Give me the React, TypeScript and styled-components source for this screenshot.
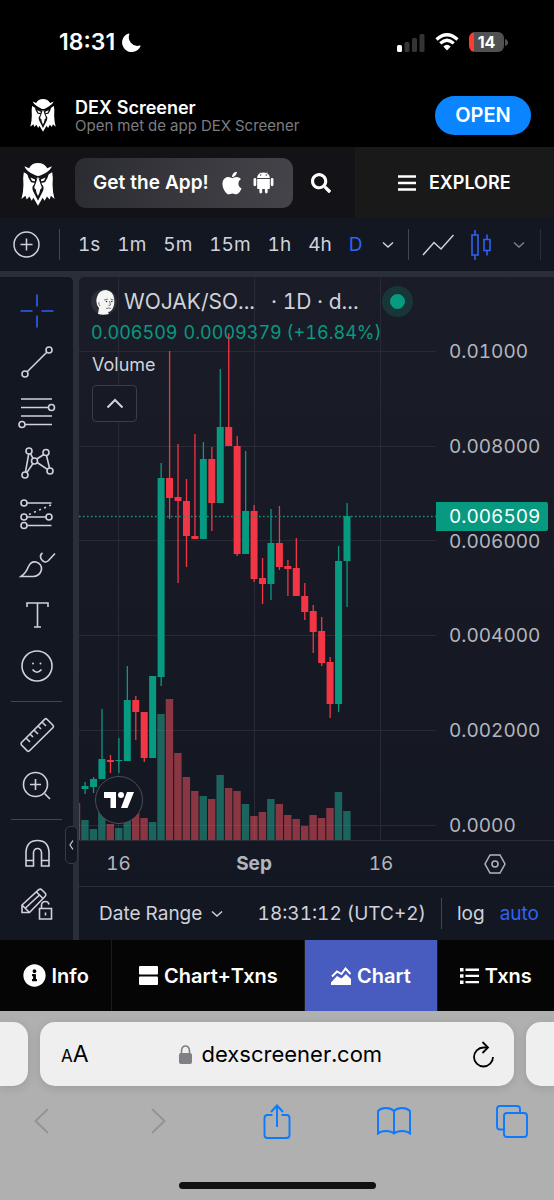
import React from 'react';
import styled, { createGlobalStyle } from 'styled-components';
import { FaApple, FaInfoCircle, FaSearch } from 'react-icons/fa';
import { IoLogoAndroid } from 'react-icons/io';

const c = {
  panel: '#131722',
  line: '#2a2e39',
  text: '#cfd2dc',
  axis: '#b2b5be',
  blue: '#2f62f5',
  green: '#089981',
  red: '#f23645',
};

const GlobalStyle = createGlobalStyle`
  * { box-sizing: border-box; }
  body { margin: 0; background: #000; font-family: Inter, "Liberation Sans", sans-serif; }
  button { font: inherit; font-variant-numeric: inherit; color: inherit; background: none; border: 0; padding: 0; cursor: pointer; }
  a { color: inherit; text-decoration: none; }
  svg { display: block; flex: none; }
`;

const Page = styled.div`
  display: flex;
  flex-direction: column;
  min-height: 100vh;
  background: #000;
  color: #fff;
  font-variant-numeric: tabular-nums;
`;

/* ---------- phone status bar and app banner ---------- */

const StatusBar = styled.div`
  display: flex;
  align-items: center;
  justify-content: space-between;
  height: 84px;
  padding: 0 46px 0 59px;
  font-variant-numeric: normal;
`;
const Clock = styled.div`
  display: flex;
  align-items: center;
  gap: 7px;
  font-size: 23px;
  font-weight: 600;
`;
const Indicators = styled.div`
  display: flex;
  align-items: center;
  gap: 10px;
`;
const Battery = styled.div`
  width: 35px;
  height: 20px;
  border-radius: 6px;
  background: linear-gradient(90deg, #ff3b30 5px, #515153 5px);
  font-size: 16px;
  font-weight: 700;
  line-height: 20px;
  text-align: center;
`;
const BatteryWrap = styled.div`
  display: flex;
  align-items: center;
  gap: 1px;
`;

const Banner = styled.section`
  display: flex;
  align-items: center;
  height: 63px;
  padding: 0 23px 0 30px;
`;
const BannerText = styled.div`
  flex: 1;
  margin-left: 19px;
`;
const BannerTitle = styled.div`
  font-size: 18px;
  font-weight: 600;
  line-height: 20px;
`;
const BannerSub = styled.div`
  font-size: 15px;
  line-height: 16px;
  color: #7c7c80;
`;
const OpenLink = styled.a`
  width: 96px;
  border-radius: 20px;
  background: #0a84ff;
  font-size: 20px;
  font-weight: 600;
  line-height: 39px;
  text-align: center;
`;

/* ---------- site header ---------- */

const Header = styled.header`
  display: flex;
  height: 71px;
  background: #131217;
`;
const HeaderMain = styled.div`
  display: flex;
  flex: 1;
  align-items: center;
  padding-left: 20px;
`;
const HomeLink = styled.a`
  padding-top: 4px;
`;
const GetApp = styled.a`
  display: flex;
  align-items: center;
  width: 218px;
  height: 50px;
  margin: 0 18px 0 19px;
  padding-left: 18px;
  border-radius: 11px;
  background: linear-gradient(100deg, #2b2b32, #45444a);
  font-size: 19px;
  font-weight: 600;
  white-space: nowrap;
`;
const StoreIcons = styled.span`
  display: flex;
  align-items: center;
  gap: 4px;
  margin-left: 10px;
`;
const Explore = styled.button`
  && {
    display: flex;
    flex: 0 0 36%;
    align-items: center;
    justify-content: center;
    gap: 13px;
    background: #191919;
    font-size: 18px;
    font-weight: 600;
  }
`;

/* ---------- chart toolbar ---------- */

const Toolbar = styled.nav`
  display: flex;
  align-items: center;
  height: 53px;
  padding-left: 13px;
  background: ${c.panel};
  color: ${c.text};
`;
const Rule = styled.span<{ $before?: number; $faint?: boolean }>`
  width: 1px;
  height: 31px;
  margin-left: ${p => p.$before ?? 0}px;
  background: ${p => (p.$faint ? '#2b2e3a' : '#434651')};
`;
const Intervals = styled.div`
  display: flex;
  gap: 17px;
  margin: 0 20px 0 18px;
`;
const Interval = styled.button<{ $active?: boolean }>`
  && { font-size: 19px; line-height: 30px; color: ${p => (p.$active ? c.blue : c.text)}; }
`;
const ToolGroup = styled.div`
  display: flex;
  align-items: center;
  gap: 17px;
  margin: 0 21px 0 13px;
`;
const MoreTypes = styled.button`
  && { color: #7c808b; }
`;

/* ---------- chart ---------- */

const Workspace = styled.main`
  display: flex;
  gap: 6px;
  padding-top: 6px;
  background: ${c.line};
`;
const Sidebar = styled.div`
  position: relative;
  display: flex;
  flex: none;
  flex-direction: column;
  align-items: center;
  width: 73px;
  padding: 9px 0 10px;
  border-radius: 0 5px 0 0;
  background: ${c.panel};
  color: ${c.text};
`;
const Tool = styled.button`
  display: flex;
  flex: 1;
  align-items: center;
  justify-content: center;
  width: 100%;
`;
const ToolRule = styled.span`
  width: 51px;
  height: 1px;
  margin: 8px 0;
  background: #434651;
`;
const Collapse = styled.button`
  && {
    position: absolute;
    right: -5px;
    bottom: 76px;
    display: grid;
    place-items: center;
    width: 13px;
    height: 38px;
    border: 1px solid #363a45;
    border-radius: 5px;
    background: ${c.panel};
  }
`;
const ChartColumn = styled.div`
  display: flex;
  flex: 1;
  flex-direction: column;
  min-width: 0;
  border-radius: 5px 0 0 0;
  background: linear-gradient(#1a1c27, ${c.panel});
`;
const Pane = styled.div`
  position: relative;
  display: flex;
`;
const Plot = styled.svg`
  flex: 1;
  min-width: 0;
  height: auto;
`;
const PriceAxis = styled.div`
  position: relative;
  display: flex;
  flex-direction: column;
  justify-content: space-between;
  width: 118px;
  padding: 63px 0 2px 13px;
  font-size: 19px;
  line-height: 24px;
  color: ${c.axis};
`;
const LastPrice = styled.div`
  position: absolute;
  top: 225px;
  left: 0;
  right: 6px;
  padding-left: 13px;
  border-radius: 0 2px 2px 0;
  background: ${c.green};
  color: #fff;
  line-height: 29px;
`;
const Legend = styled.div`
  position: absolute;
  top: 9px;
  left: 12px;
  right: 0;
  color: ${c.text};
`;
const LegendTitle = styled.div`
  display: flex;
  align-items: center;
  height: 31px;
  font-size: 21px;
  white-space: pre;
`;
const Symbol = styled.span`
  margin: 0 16px 0 7px;
`;
const Live = styled.span`
  width: 31px;
  height: 31px;
  margin-left: 23px;
  border: 8px solid #183537;
  border-radius: 50%;
  background: ${c.green};
`;
const Quote = styled.div`
  display: flex;
  gap: 6px;
  font-size: 18px;
  line-height: 32px;
  color: ${c.green};
`;
const VolumeLabel = styled.div`
  padding-left: 1px;
  font-size: 18px;
  line-height: 32px;
`;
const Fold = styled.button`
  && {
    display: grid;
    place-items: center;
    width: 45px;
    height: 37px;
    margin: 4px 0 0 1px;
    border: 1px solid #3a3d48;
    border-radius: 4px;
    background: #171a25;
  }
`;
const Badge = styled.a`
  position: absolute;
  left: 16px;
  bottom: 16px;
  display: grid;
  place-items: center;
  width: 48px;
  height: 48px;
  border: 1px solid #4a4d57;
  border-radius: 50%;
  background: ${c.panel};
`;
const TimeAxis = styled.div`
  display: flex;
  height: 47px;
  border: solid ${c.line};
  border-width: 1px 0;
  font-size: 19px;
  line-height: 46px;
  text-align: center;
  color: ${c.axis};
`;
const Dates = styled.div`
  display: grid;
  flex: 1;
  grid-template-columns: 79fr 192fr 62fr 24fr;
`;
const AxisSettings = styled.button`
  display: grid;
  place-items: center;
  width: 118px;
`;
const BottomRow = styled.div`
  display: flex;
  align-items: center;
  height: 53px;
  padding: 0 15px 0 20px;
  font-size: 19px;
  color: ${c.text};
  white-space: nowrap;
`;
const RangeButton = styled.button`
  display: flex;
  align-items: center;
  gap: 9px;
`;
const RightGroup = styled.div`
  display: flex;
  align-items: center;
  gap: 15px;
  margin-left: auto;
`;
const ScaleButton = styled.button<{ $active?: boolean }>`
  && { color: ${p => (p.$active ? c.blue : c.text)}; }
`;

/* ---------- page tabs ---------- */

const Tabs = styled.nav`
  display: flex;
  height: 71px;
  background: #050505;
`;
const Tab = styled.a<{ $grow: number; $active?: boolean }>`
  display: flex;
  flex: ${p => p.$grow} 1 0;
  align-items: center;
  justify-content: center;
  gap: 6px;
  border-right: 1px solid #1c1c1e;
  background: ${p => (p.$active ? '#485cc0' : 'transparent')};
  font-size: 20px;
  font-weight: 600;
  white-space: nowrap;
  &:last-child { border-right: 0; }
`;

/* ---------- browser chrome ---------- */

const Browser = styled.footer`
  display: flex;
  flex: 1;
  flex-direction: column;
  padding-top: 11px;
  background: #b0b0b0;
  color: #000;
  overflow: hidden;
`;
const AddressRow = styled.div`
  display: flex;
  gap: 12px;
`;
const SideCard = styled.div<{ $left?: boolean }>`
  width: 28px;
  border-radius: ${p => (p.$left ? '0 15px 15px 0' : '15px 0 0 15px')};
  background: #efefef;
  box-shadow: 0 2px 10px rgba(0, 0, 0, 0.12);
`;
const Address = styled.div`
  display: flex;
  flex: 1;
  align-items: center;
  justify-content: space-between;
  height: 64px;
  padding: 0 19px 0 21px;
  border-radius: 15px;
  background: #efefef;
  box-shadow: 0 2px 10px rgba(0, 0, 0, 0.12);
`;
const TextSize = styled.button`
  && { font-size: 23px; }
  small { font-size: 17px; }
`;
const Host = styled.div`
  display: flex;
  align-items: center;
  gap: 10px;
  font-size: 22px;
`;
const Actions = styled.div`
  display: flex;
  align-items: center;
  justify-content: space-between;
  height: 70px;
  padding: 0 25px 0 24px;
  color: #0a7aff;
`;
const Action = styled.button<{ $muted?: boolean }>`
  && {
    display: grid;
    place-items: center;
    width: 34px;
    height: 44px;
    color: ${p => (p.$muted ? '#949494' : 'inherit')};
  }
`;
const HomeBar = styled.div`
  width: 197px;
  height: 7px;
  margin: auto auto 11px;
  border-radius: 4px;
  background: #111;
`;

/* ---------- drawings ---------- */

const Owl = ({ width, height }: { width: number; height: number }) => (
  <svg width={width} height={height} viewBox="20 25 102 130" fill="#fff">
    <path d="M30 35 L44 41 Q52 25 71 25 Q90 25 99 41 L113 35 Q108 48 94 55 L80 62 Q71 66 63 62 L49 55 Q35 48 30 35Z" />
    <path d="M28 53 Q25 68 27 90 Q27 113 21 134 L33 124 L37 135 L45 126 L52 139 L57 130 L71 154 L85 130 L91 139 L98 126 L106 135 L110 124 L121 134 Q115 113 115 90 Q117 68 114 53 L94 64 L71 73 L48 64Z" />
    <path d="M38 57 L66 70 L70 86 L50 83Q42 74 38 57Z M104 57 L76 70 L72 86 L92 83Q100 74 104 57Z" fill="#111116" />
    <path d="M48 69 L62 75 L62 80 L53 79Z M94 69 L80 75 L80 80 L89 79Z" />
    <path d="M64 73 L59 90 Q51 96 56 110 L71 139 L86 110 Q91 96 83 90 L78 73Z" fill="#111116" />
    <path d="M71 66 L78 87 L82 97 Q84 103 78 104 Q76 117 71 125 Q66 117 64 104 Q58 103 60 97 L64 87Z" />
  </svg>
);

const Wojak = () => (
  <svg width="26" height="26" viewBox="0 0 26 26">
    <circle cx="13" cy="13" r="13" fill="#2b2e36" />
    <path d="M7 25 L8 19 Q4 14 6 8 Q8 1 15 1 Q22 2 23 9 Q24 15 22 19 Q20 23 17 23 L18 25 Q12 26.5 7 25Z" fill="#f5f5f5" />
    <path d="M13 11 l4 -1 M19.5 10 l3 1 M18.5 12 l1 4 -2 .5 M15 19.5 q2.5 -1 5 0 M9 17 q-2 -2 -1 -4" stroke="#444" strokeWidth="0.7" fill="none" />
    <circle cx="15.5" cy="12.5" r="0.8" fill="#222" />
    <circle cx="20.8" cy="12.5" r="0.8" fill="#222" />
  </svg>
);

const Chevron = () => (
  <svg width="12" height="8" viewBox="0 0 12 8" fill="none" stroke="currentColor" strokeWidth="1.5">
    <path d="M1 1.5 L6 6 L11 1.5" />
  </svg>
);

const toolIcons: Record<string, React.ReactNode> = {
  Crosshair: <path d="M18 1.5v12M18 22.5v12M1.5 18h12M22.5 18h12" stroke={c.blue} />,
  'Trend line': (
    <>
      <circle cx="6" cy="30" r="3" /><circle cx="30" cy="6" r="3" /><path d="M8.2 27.8 L27.8 8.2" />
    </>
  ),
  Fibonacci: (
    <>
      <path d="M2 4h31M2 12.5h27.5M2 21h31M6 29.5h27" />
      <circle cx="32.5" cy="12.5" r="3" /><circle cx="3" cy="29.5" r="3" />
    </>
  ),
  Patterns: (
    <>
      <circle cx="10" cy="5" r="3" /><circle cx="27" cy="6.5" r="3" /><circle cx="15.5" cy="15" r="3" />
      <circle cx="6" cy="29" r="3" /><circle cx="31" cy="25" r="3" />
      <path d="M9.7 8 L6.5 26 M11.5 7.6 L14 12.4 M24.8 8.5 L17.8 13 M27.5 9.5 L30.5 22 M14 17.5 L7.8 26.6 M18.2 16.5 L28.4 23.4" />
    </>
  ),
  Prediction: (
    <>
      <circle cx="5" cy="6" r="3" /><circle cx="5" cy="20" r="3" /><circle cx="30" cy="20" r="3" /><circle cx="5" cy="28.5" r="3" />
      <path d="M8 6h24.5M8 20h19M8 28.5h24.5" /><path d="M10 17.5 L32 8" strokeDasharray="2 3.5" />
    </>
  ),
  Brush: (
    <>
      <path d="M2 28.5 Q7 25 9.5 18.5 Q12 13 17 14 Q23 16 22.5 21.5 Q21 28 14.5 28.5 Z" />
      <path d="M23.5 5 Q20 7.5 22.5 11.5 Q26 16 29.5 12.5 L36 5.5" />
    </>
  ),
  Text: <path d="M8 9V5h21v4M18.5 5v24M15 29h7" />,
  Emoji: (
    <>
      <circle cx="18" cy="17" r="15" /><path d="M13.5 20.5 Q18 26 22.5 20.5" />
      <circle cx="14" cy="14.5" r="1" fill="currentColor" stroke="none" /><circle cx="21.5" cy="14.5" r="1" fill="currentColor" stroke="none" />
    </>
  ),
  Ruler: (
    <path d="M2.5 25.5 L25.8 2.2 Q27 1.2 28 2.2 L34 8.2 Q35 9.4 34 10.5 L10.5 33.8 Q9.5 34.8 8.3 33.8 L2.5 28 Q1.5 26.8 2.5 25.5Z M7 21l4 4M11 17l3 3M15 13l4 4M19 9l3 3M23 5l4 4" />
  ),
  Zoom: (
    <>
      <circle cx="16.5" cy="16.5" r="12" /><path d="M16.5 11v11M11 16.5h11M25.5 25.5 L31 31" />
    </>
  ),
  Magnet: (
    <path d="M7 30V16.5Q7.5 4.5 18.5 4.5T30 16.5V30H22.5V16.5Q22 12.5 18.5 12.5T14.5 16.5V30Z M7 24.5h7.5M22.5 24.5H30" />
  ),
  'Lock drawings': (
    <>
      <path d="M3 25.5 V18 L20 2.5 Q21.5 1.5 23 3 L26.5 6.5 Q27.5 8 26 9.5 L10.5 25.5 Z M3 18 L10.5 25.5 M17.5 5 L24.5 12 M6.5 21 L21 7.5" />
      <path d="M20.5 21.5h12v10.5h-12z M22.5 21.5v-3.5q.5 -3.5 4 -3.5q3 0 3.5 3M26.5 25.5v3" />
    </>
  ),
};

const ToolIcon = ({ name }: { name: string }) => (
  <svg width="36" height="36" viewBox="0 0 36 36" fill="none" stroke="currentColor" strokeWidth="1.6" overflow="visible">
    {toolIcons[name]}
  </svg>
);

/* [up, wick top, body top, body bottom, wick bottom, volume top], in plot units */
type Bar = [0 | 1, number, number, number, number, number];
const bars: Bar[] = [
  [0, 0, 0, 0, 0, 526],
  [1, 505, 509, 512, 517, 543],
  [1, 500, 502, 510, 516, 552],
  [1, 432, 482, 502, 502, 535],
  [0, 478, 483, 485, 496, 547],
  [1, 461, 483, 484, 496, 551],
  [1, 389, 423, 484, 484, 540],
  [0, 419, 423, 435, 463, 536],
  [0, 435, 435, 481, 485, 541],
  [1, 399, 399, 481, 481, 545],
  [1, 186, 201, 400, 409, 437],
  [0, 74, 201, 221, 242, 422],
  [0, 167, 220, 224, 306, 476],
  [0, 202, 224, 259, 290, 500],
  [0, 157, 259, 262, 262, 514],
  [1, 165, 182, 262, 262, 519],
  [0, 170, 182, 226, 254, 522],
  [1, 92, 150, 226, 226, 498],
  [0, 56, 150, 169, 169, 511],
  [0, 159, 169, 277, 279, 514],
  [1, 174, 234, 277, 277, 527],
  [0, 228, 234, 302, 305, 539],
  [0, 281, 301, 307, 327, 535],
  [1, 232, 266, 307, 323, 522],
  [0, 229, 266, 290, 293, 527],
  [0, 283, 289, 292, 319, 538],
  [0, 261, 291, 319, 319, 542],
  [0, 306, 319, 335, 343, 549],
  [0, 328, 334, 355, 376, 538],
  [0, 340, 354, 386, 389, 541],
  [0, 380, 385, 427, 441, 531],
  [1, 269, 284, 427, 435, 515],
  [1, 226, 239, 284, 330, 534],
];
const prices = ['0.01000', '0.008000', '0.006000', '0.004000', '0.002000', '0.0000'];

const Candles = () => (
  <Plot viewBox="0 0 357 563" role="img" aria-label="WOJAK/SOL daily price and volume">
    {[74, 169, 263, 358, 453, 548].map(y => (
      <path key={y} d={`M0 ${y + 0.5}H357`} stroke="#282b36" />
    ))}
    {[39, 175, 301].map(x => (
      <path key={x} d={`M${x + 0.5} 0V563`} stroke="#282b36" />
    ))}
    {bars.map(([up, , , , , vol], i) => (
      <rect key={i} x={264.2 - (32 - i) * 8.45} y={vol} width="7.4" height={563 - vol} fill={up ? '#22ab94' : '#f7525f'} opacity="0.52" />
    ))}
    {bars.slice(1).map(([up, high, top, bottom, low], i) => {
      const x = 268 - (31 - i) * 8.45;
      return (
        <g key={i} fill={up ? c.green : c.red}>
          <rect x={x - 0.6} y={high} width="1.3" height={low - high} />
          <rect x={x - 3.5} y={top} width="7" height={bottom - top} />
        </g>
      );
    })}
    <path d="M0 239.5H357" stroke={c.green} strokeWidth="1.4" strokeDasharray="1.6 2.4" />
  </Plot>
);

const intervals = ['1s', '1m', '5m', '15m', '1h', '4h', 'D'];
const tools = ['Crosshair', 'Trend line', 'Fibonacci', 'Patterns', 'Prediction', 'Brush', 'Text', 'Emoji', '-', 'Ruler', 'Zoom', '-', 'Magnet', 'Lock drawings'];

export default function App() {
  return (
    <Page>
      <GlobalStyle />
      <StatusBar>
        <Clock>
          18:31
          <svg width="19" height="19" viewBox="0 0 19 19" fill="#fff"><path d="M6.5 0.4 A9.6 9.6 0 1 0 18.7 12.8 Q18.3 12.2 17.5 12.6 A8.6 8.6 0 0 1 7.3 1.4 Q7.4 .3 6.5 .4Z" /></svg>
        </Clock>
        <Indicators>
          <svg width="28" height="19" viewBox="0 0 28 19" fill="#343436">
            <rect x="0" y="12" width="5" height="7" rx="1.5" fill="#fff" />
            <rect x="7.5" y="9" width="5" height="10" rx="1.5" />
            <rect x="15" y="5" width="5" height="14" rx="1.5" />
            <rect x="22.5" y="1" width="5" height="18" rx="1.5" />
          </svg>
          <svg width="24" height="18" viewBox="0 0 24 18" fill="none" stroke="#fff" strokeWidth="3.2">
            <path d="M1.5 6.5 Q12 -3 22.5 6.5" />
            <path d="M5.3 10.4 Q12 4.2 18.7 10.4" />
            <path d="M8.3 13.5 Q12 9.8 15.7 13.5 L12 17.5Z" fill="#fff" stroke="none" />
          </svg>
          <BatteryWrap>
            <Battery>14</Battery>
            <svg width="3" height="7" viewBox="0 0 3 7"><path d="M0 0 Q3 1 3 3.5 T0 7Z" fill="#515153" /></svg>
          </BatteryWrap>
        </Indicators>
      </StatusBar>

      <Banner>
        <Owl width={26} height={33} />
        <BannerText>
          <BannerTitle>DEX Screener</BannerTitle>
          <BannerSub>Open met de app DEX Screener</BannerSub>
        </BannerText>
        <OpenLink href="#open">OPEN</OpenLink>
      </Banner>

      <Header>
        <HeaderMain>
          <HomeLink href="#home" aria-label="DEX Screener"><Owl width={36} height={43} /></HomeLink>
          <GetApp href="#app">
            Get the App!
            <StoreIcons><FaApple size={26} /><IoLogoAndroid size={29} /></StoreIcons>
          </GetApp>
          <button aria-label="Search"><FaSearch size={20} /></button>
        </HeaderMain>
        <Explore>
          <svg width="18" height="16" viewBox="0 0 18 16" fill="none" stroke="currentColor" strokeWidth="2.4"><path d="M0 1.5h18M0 8h18M0 14.5h18" /></svg>
          EXPLORE
        </Explore>
      </Header>

      <Toolbar>
        <button aria-label="Compare">
          <svg width="27" height="27" viewBox="0 0 27 27" fill="none" stroke="currentColor" strokeWidth="1.5"><circle cx="13.5" cy="13.5" r="12.5" /><path d="M13.5 7.5v12M7.5 13.5h12" /></svg>
        </button>
        <Rule $before={19} />
        <Intervals>
          {intervals.map(t => <Interval key={t} $active={t === 'D'}>{t}</Interval>)}
        </Intervals>
        <button aria-label="More intervals"><Chevron /></button>
        <Rule $before={14} />
        <ToolGroup>
          <button aria-label="Line chart">
            <svg width="32" height="22" viewBox="0 0 32 22" fill="none" stroke="currentColor" strokeWidth="1.5"><path d="M1 21 L12 8.5 L19 15 L31.5 1" /></svg>
          </button>
          <button aria-label="Candles">
            <svg width="21" height="30" viewBox="0 0 21 30" fill="none" stroke={c.blue} strokeWidth="1.6"><path d="M1 5h6v20h-6z M4 0v5M4 25v5 M13 9.5h6v11h-6z M16 4.5v5M16 20.5v5" /></svg>
          </button>
        </ToolGroup>
        <MoreTypes aria-label="More chart types"><Chevron /></MoreTypes>
        <Rule $before={15} $faint />
      </Toolbar>

      <Workspace>
        <Sidebar>
          {tools.map((t, i) => (t === '-' ? <ToolRule key={i} /> : <Tool key={t} aria-label={t}><ToolIcon name={t} /></Tool>))}
          <Collapse aria-label="Hide drawings toolbar">
            <svg width="5" height="10" viewBox="0 0 5 10" fill="none" stroke={c.text} strokeWidth="1.2"><path d="M4 0.5 L1 5 L4 9.5" /></svg>
          </Collapse>
        </Sidebar>
        <ChartColumn>
          <Pane>
            <Candles />
            <PriceAxis>
              {prices.map(p => <span key={p}>{p}</span>)}
              <LastPrice>0.006509</LastPrice>
            </PriceAxis>
            <Legend>
              <LegendTitle>
                <Wojak /><Symbol>WOJAK/SO...</Symbol><span>· 1D · d...</span><Live />
              </LegendTitle>
              <Quote><span>0.006509</span><span>0.0009379 (+16.84%)</span></Quote>
              <VolumeLabel>Volume</VolumeLabel>
              <Fold aria-label="Hide indicator legend">
                <svg width="18" height="11" viewBox="0 0 18 11" fill="none" stroke={c.text} strokeWidth="2"><path d="M1.5 9.5 L9 2 L16.5 9.5" /></svg>
              </Fold>
            </Legend>
            <Badge href="#tradingview" aria-label="TradingView">
              <svg width="30" height="16" viewBox="0 0 30 16" fill="#fff"><path d="M0 0H12V16H6.5V6H0Z" /><circle cx="17" cy="3" r="3" /><path d="M23 0H30L23.5 16H17Z" /></svg>
            </Badge>
          </Pane>
          <TimeAxis>
            <Dates><span>16</span><strong>Sep</strong><span>16</span></Dates>
            <AxisSettings aria-label="Axis settings">
              <svg width="22" height="20" viewBox="0 0 22 20" fill="none" stroke={c.axis} strokeWidth="1.5"><path d="M6 1h10l5 9-5 9H6l-5-9z" /><circle cx="11" cy="10" r="3" /></svg>
            </AxisSettings>
          </TimeAxis>
          <BottomRow>
            <RangeButton>Date Range <Chevron /></RangeButton>
            <RightGroup>
              <button>18:31:12 (UTC+2)</button>
              <Rule />
              <ScaleButton>log</ScaleButton>
              <ScaleButton $active>auto</ScaleButton>
            </RightGroup>
          </BottomRow>
        </ChartColumn>
      </Workspace>

      <Tabs>
        <Tab href="#info" $grow={112}><FaInfoCircle size={23} />Info</Tab>
        <Tab href="#both" $grow={193}>
          <svg width="19" height="19" viewBox="0 0 19 19" fill="currentColor"><rect width="19" height="8.5" rx="1" /><rect y="10.5" width="19" height="8.5" rx="1" /></svg>
          Chart+Txns
        </Tab>
        <Tab href="#chart" $grow={132} $active>
          <svg width="20" height="18" viewBox="0 0 20 18"><path d="M0 18V15.5L6 9 L10.5 11.5 L15 7 L20 12V18Z" fill="currentColor" /><path d="M1 9.5 L6 4.5 L10.5 7 L14.5 1.5 L19.5 7" fill="none" stroke="currentColor" strokeWidth="2" /></svg>
          Chart
        </Tab>
        <Tab href="#txns" $grow={117}>
          <svg width="19" height="16" viewBox="0 0 19 16" fill="currentColor"><path d="M0 0h3.5v3.5H0zM0 6.2h3.5v3.5H0zM0 12.4h3.5v3.5H0zM5.5 .6H19v2.3H5.5zM5.5 6.8H19v2.3H5.5zM5.5 13H19v2.3H5.5z" /></svg>
          Txns
        </Tab>
      </Tabs>

      <Browser>
        <AddressRow>
          <SideCard $left />
          <Address>
            <TextSize aria-label="Text size"><small>A</small>A</TextSize>
            <Host>
              <svg width="13" height="19" viewBox="0 0 13 19"><rect y="8" width="13" height="11" rx="2" fill="#808084" /><path d="M2.5 9V5.5Q3 1 6.5 1T10.5 5.5V9" fill="none" stroke="#808084" strokeWidth="1.6" /></svg>
              dexscreener.com
            </Host>
            <button aria-label="Reload">
              <svg width="23" height="27" viewBox="0 0 23 27" fill="none" stroke="#000" strokeWidth="1.8"><path d="M15.5 6.5 H11.5 A9.5 9.5 0 1 0 21 16" /><path d="M10.5 1 L16 6.5 L10.5 12" /></svg>
            </button>
          </Address>
          <SideCard />
        </AddressRow>
        <Actions>
          <Action $muted aria-label="Back"><svg width="15" height="26" viewBox="0 0 15 26" fill="none" stroke="currentColor" strokeWidth="2"><path d="M14 1 L1.5 13 L14 25" /></svg></Action>
          <Action $muted aria-label="Forward"><svg width="15" height="26" viewBox="0 0 15 26" fill="none" stroke="currentColor" strokeWidth="2"><path d="M1 1 L13.5 13 L1 25" /></svg></Action>
          <Action aria-label="Share"><svg width="28" height="35" viewBox="0 0 28 35" fill="none" stroke="currentColor" strokeWidth="1.9"><path d="M9.5 11H4.5Q1.5 11 1.5 14V31Q1.5 34 4.5 34H23.5Q26.5 34 26.5 31V14Q26.5 11 23.5 11H18.5M14 23V2M8 8 L14 1.5 L20 8" /></svg></Action>
          <Action aria-label="Bookmarks"><svg width="34" height="28" viewBox="0 0 34 28" fill="none" stroke="currentColor" strokeWidth="1.9"><path d="M17 4Q14 1 9 1T1 4V26.5Q4 24 9 24T17 26.5Q20 24 25 24T33 26.5V4Q30 1 25 1T17 4V26.5" /></svg></Action>
          <Action aria-label="Tabs"><svg width="32" height="33" viewBox="0 0 32 33" fill="none" stroke="currentColor" strokeWidth="1.9"><path d="M8 24.5H4Q1 24.5 1 21.5V4Q1 1 4 1H21Q24 1 24 4V8" /><rect x="8" y="8" width="23" height="24" rx="3" /></svg></Action>
        </Actions>
        <HomeBar />
      </Browser>
    </Page>
  );
}
